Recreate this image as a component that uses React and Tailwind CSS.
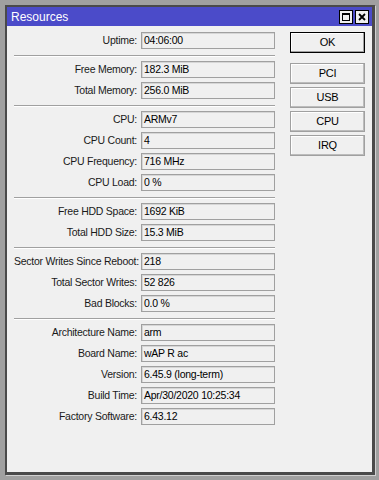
const GROUPS = [
  [['Uptime', '04:06:00']],
  [['Free Memory', '182.3 MiB'], ['Total Memory', '256.0 MiB']],
  [['CPU', 'ARMv7'], ['CPU Count', '4'], ['CPU Frequency', '716 MHz'], ['CPU Load', '0 %']],
  [['Free HDD Space', '1692 KiB'], ['Total HDD Size', '15.3 MiB']],
  [['Sector Writes Since Reboot', '218'], ['Total Sector Writes', '52 826'], ['Bad Blocks', '0.0 %']],
  [
    ['Architecture Name', 'arm'],
    ['Board Name', 'wAP R ac'],
    ['Version', '6.45.9 (long-term)'],
    ['Build Time', 'Apr/30/2020 10:25:34'],
    ['Factory Software', '6.43.12'],
  ],
]

function Field({ label, value }) {
  return (
    <div className="flex items-center h-[17px] gap-[4px]">
      <div className="w-[123px] text-right whitespace-nowrap text-[#1a1a1a]">{label}:</div>
      <div className="w-[134px] h-[17px] border border-[#a0a0a0] shadow-[inset_1px_1px_0_#d6d6d6] pl-[2px] flex items-center whitespace-nowrap overflow-hidden">
        {value}
      </div>
    </div>
  )
}

function Separator() {
  return <div className="mt-[2px] h-[2px] border-t border-[#a0a0a0] border-b border-b-white w-[261px]" />
}

function Btn({ children, primary }) {
  return (
    <div
      className={
        'w-[75px] h-[21px] flex items-center justify-center bg-[#f0f0f0] text-[11px] ' +
        (primary
          ? 'border border-black shadow-[inset_-1px_-1px_0_#a0a0a0,inset_1px_1px_0_#fff]'
          : 'border border-[#a0a0a0] shadow-[inset_-1px_-1px_0_#bcbcbc,inset_1px_1px_0_#fff]')
      }
    >
      {children}
    </div>
  )
}

export default function App() {
  return (
    <div
      className="w-[379px] h-[480px] bg-[#a0a0a0] pt-[5px] pl-[5px] text-[10.5px] tracking-[-0.25px] text-black"
      style={{ fontFamily: '"Liberation Sans", Arial, sans-serif' }}
    >
      <div className="w-[370px] h-[470px] bg-[#f0f0f0] border-t-2 border-l-2 border-r-[3px] border-b-[3px] border-[#4a4a4a] shadow-[1px_1px_0_#d0d0d0] flex flex-col">
        {/* title bar */}
        <div className="h-[19px] bg-[#4b4bc9] flex items-center justify-between pl-[4px] pr-[3px]">
          <span className="text-white text-[12px] tracking-normal">Resources</span>
          <div className="flex gap-[2px]">
            <div className="w-[14px] h-[14px] bg-[#f0f0f0] border border-black flex items-center justify-center">
              <div className="w-[8px] h-[8px] border border-black border-t-2" />
            </div>
            <div className="w-[14px] h-[14px] bg-[#f0f0f0] border border-black flex items-center justify-center">
              <svg width="8" height="8" viewBox="0 0 8 8">
                <path d="M1 1L7 7M7 1L1 7" stroke="#000" strokeWidth="1.8" />
              </svg>
            </div>
          </div>
        </div>

        <div className="flex pl-[7px] pt-[6px]">
          <div className="flex flex-col gap-[4px]">
            {GROUPS.map((g, gi) => (
              <div key={gi} className="contents">
                {gi > 0 && <Separator />}
                {g.map(([l, v]) => (
                  <Field key={l} label={l} value={v} />
                ))}
              </div>
            ))}
          </div>
          <div className="ml-[15px] flex flex-col gap-[3px]">
            <Btn primary>OK</Btn>
            <div className="h-[4px]" />
            <Btn>PCI</Btn>
            <Btn>USB</Btn>
            <Btn>CPU</Btn>
            <Btn>IRQ</Btn>
          </div>
        </div>
      </div>
    </div>
  )
}
